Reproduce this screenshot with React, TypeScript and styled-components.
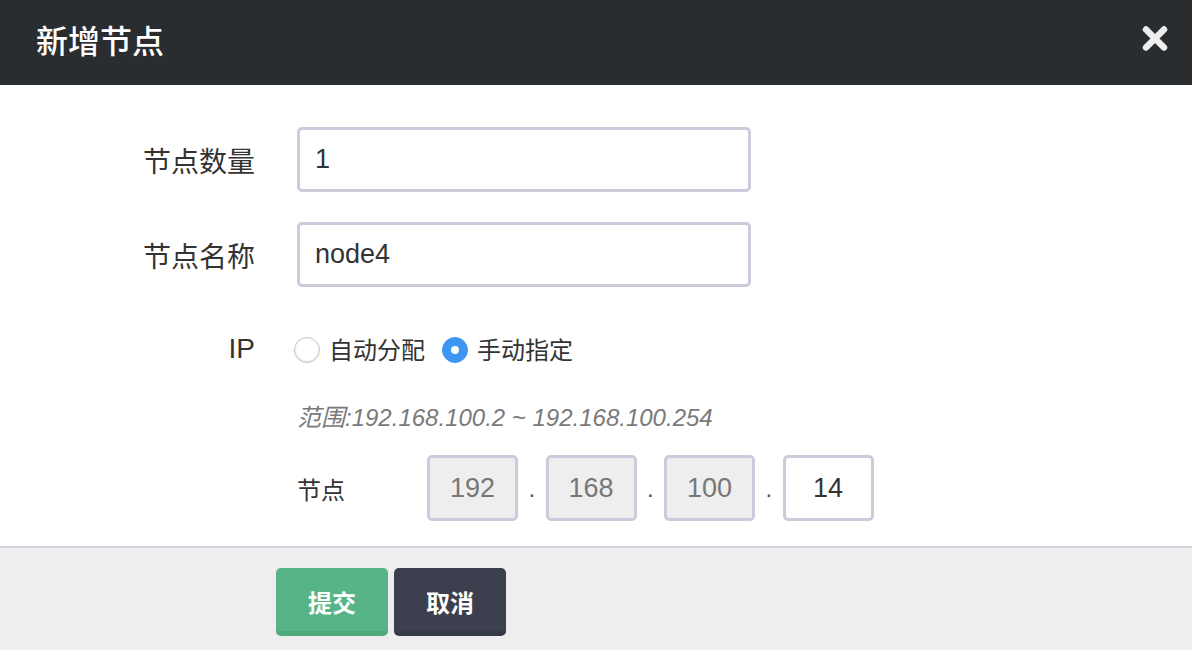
import React from "react";
import styled, { createGlobalStyle } from "styled-components";

const Global = createGlobalStyle`
  html, body { margin: 0; padding: 0; background: #ffffff; }
  body { font-family: "Liberation Sans", "Noto Sans CJK SC", sans-serif; color: #333333; }
  * { box-sizing: border-box; }
`;

const Dialog = styled.div`
  width: 1192px;
  height: 650px;
  overflow: hidden;
  display: flex;
  flex-direction: column;
  background: #ffffff;
`;

const Header = styled.div`
  height: 85px;
  flex: none;
  background: #2a2d2f;
  display: flex;
  align-items: center;
  justify-content: space-between;
  padding: 0 22px 8px 36px;
`;

const Title = styled.h1`
  margin: 0;
  font-family: "Noto Sans CJK SC", sans-serif;
  font-size: 32px;
  font-weight: 500;
  color: #ffffff;
  letter-spacing: 0;
`;

const CloseButton = styled.button`
  width: 30px;
  height: 30px;
  padding: 0;
  border: 0;
  background: transparent;
  display: flex;
  align-items: center;
  justify-content: center;
  cursor: pointer;
`;

const Body = styled.div`
  padding: 42px 0 25px 0;
  display: flex;
  flex-direction: column;
`;

const Row = styled.div<{ $top?: number; $height: number }>`
  display: grid;
  grid-template-columns: 255px 454px;
  column-gap: 42px;
  align-items: center;
  height: ${(p) => p.$height}px;
  margin-top: ${(p) => p.$top ?? 0}px;
`;

const Label = styled.label`
  text-align: right;
  font-size: 28px;
  color: #333333;
  white-space: nowrap;
`;

const TextInput = styled.div`
  height: 65px;
  border: 3px solid #cccbdb;
  border-radius: 5px;
  padding: 0 15px;
  display: flex;
  align-items: center;
  font-size: 27px;
  color: #333333;
  background: #ffffff;
`;

const RadioGroup = styled.div`
  display: flex;
  align-items: center;
  gap: 17px;
  margin-left: -3px;
`;

const RadioOption = styled.div`
  display: flex;
  align-items: center;
  gap: 9px;
  font-size: 24px;
  color: #333333;
  white-space: nowrap;
`;

const RadioCircle = styled.span<{ $checked?: boolean }>`
  width: 26px;
  height: 26px;
  border-radius: 50%;
  flex: none;
  display: flex;
  align-items: center;
  justify-content: center;
  margin-top: 3px;
  background: ${(p) => (p.$checked ? "#3d97f2" : "#ffffff")};
  border: 1px solid ${(p) => (p.$checked ? "#3d97f2" : "#c4c4c4")};
  box-shadow: ${(p) => (p.$checked ? "none" : "inset 0 -1px 2px rgba(0,0,0,0.12)")};
  &::after {
    content: "";
    display: ${(p) => (p.$checked ? "block" : "none")};
    width: 8px;
    height: 8px;
    border-radius: 50%;
    background: #ffffff;
  }
`;

const Hint = styled.div`
  font-size: 24px;
  font-style: italic;
  color: #7a7a7a;
  white-space: nowrap;
`;

const IpLine = styled.div`
  display: flex;
  align-items: center;
`;

const IpLabel = styled.span`
  width: 130px;
  flex: none;
  font-size: 24px;
  color: #333333;
`;

const IpBox = styled.div<{ $disabled?: boolean }>`
  width: 91px;
  height: 66px;
  flex: none;
  border: 3px solid #cccbdb;
  border-radius: 5px;
  display: flex;
  align-items: center;
  justify-content: center;
  font-size: 27px;
  background: ${(p) => (p.$disabled ? "#eeeeee" : "#ffffff")};
  color: ${(p) => (p.$disabled ? "#777777" : "#333333")};
`;

const IpDot = styled.span`
  width: 27.5px;
  flex: none;
  text-align: center;
  font-size: 24px;
  color: #555555;
  line-height: 1;
  padding-top: 2px;
`;

const Footer = styled.div`
  flex: 1;
  border-top: 2px solid #d3d2e0;
  background: #eeeeee;
  padding: 20px 0 0 276px;
  display: flex;
  align-items: flex-start;
  gap: 6px;
`;

const Button = styled.button<{ $variant: "primary" | "dark" }>`
  width: 112px;
  height: 68px;
  border: 0;
  border-radius: 5px;
  border-bottom: 5px solid ${(p) => (p.$variant === "primary" ? "#4ea97b" : "#363946")};
  background: ${(p) => (p.$variant === "primary" ? "#57b486" : "#3c3f4d")};
  color: #ffffff;
  font-family: "Noto Sans CJK SC", sans-serif;
  font-size: 24px;
  font-weight: 700;
  padding: 3px 0 0 0;
  cursor: pointer;
`;

export default function App() {
  const ip = ["192", "168", "100"];
  return (
    <>
      <Global />
      <Dialog>
        <Header>
          <Title>新增节点</Title>
          <CloseButton aria-label="关闭">
            <svg width="26" height="27" viewBox="0 0 26 27">
              <path d="M4 4.5 L22 22.5 M22 4.5 L4 22.5" stroke="#eeeeee" strokeWidth="6.5" strokeLinecap="round" />
            </svg>
          </CloseButton>
        </Header>
        <Body>
          <Row $height={65}>
            <Label>节点数量</Label>
            <TextInput>1</TextInput>
          </Row>
          <Row $top={30} $height={65}>
            <Label>节点名称</Label>
            <TextInput>node4</TextInput>
          </Row>
          <Row $top={44} $height={30}>
            <Label>IP</Label>
            <RadioGroup>
              <RadioOption>
                <RadioCircle />
                自动分配
              </RadioOption>
              <RadioOption>
                <RadioCircle $checked />
                手动指定
              </RadioOption>
            </RadioGroup>
          </Row>
          <Row $top={37} $height={28}>
            <span />
            <Hint>范围:192.168.100.2 ~ 192.168.100.254</Hint>
          </Row>
          <Row $top={29} $height={66}>
            <span />
            <IpLine>
              <IpLabel>节点</IpLabel>
              {ip.map((v) => (
                <React.Fragment key={v}>
                  <IpBox $disabled>{v}</IpBox>
                  <IpDot>.</IpDot>
                </React.Fragment>
              ))}
              <IpBox>14</IpBox>
            </IpLine>
          </Row>
        </Body>
        <Footer>
          <Button $variant="primary">提交</Button>
          <Button $variant="dark">取消</Button>
        </Footer>
      </Dialog>
    </>
  );
}
